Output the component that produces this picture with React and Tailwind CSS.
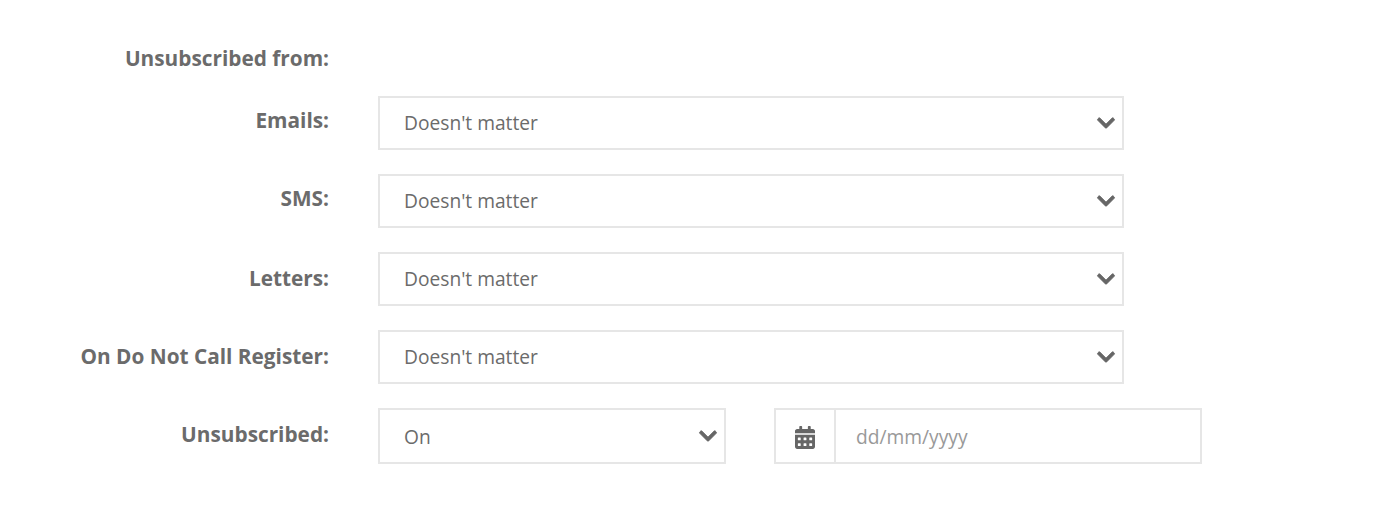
import { FaCalendarAlt, FaChevronDown } from 'react-icons/fa'

function SelectBox({ value, className, textClass }) {
  return (
    <div className={`flex h-full items-center justify-between border-2 border-[#e6e6e6] bg-white pl-[24px] pr-[6px] text-[19.2px] ${className}`}>
      <span className={`text-[#6b6b6b] ${textClass}`}>{value}</span>
      <FaChevronDown stroke="currentColor" strokeWidth={20} className="w-[20px] h-[20px] text-[#666]" />
    </div>
  )
}

function Row({ label, labelClass, children, className }) {
  return (
    <div className={`flex ${className}`}>
      <label className={`w-[329px] text-right font-bold text-[#6b6b6b] ${labelClass}`}>{label}</label>
      <div className="ml-[49px] flex">{children}</div>
    </div>
  )
}

export default function App() {
  const rows = [
    { label: 'Emails:', labelClass: 'pt-[11px]' },
    { label: 'SMS:', labelClass: 'pt-[11px]' },
    { label: 'Letters:', labelClass: 'pt-[13px]' },
    { label: 'On Do Not Call Register:', labelClass: 'pt-[13px]' },
  ]

  return (
    <div className="h-[520px] w-[1380px] overflow-hidden bg-white pt-[34px] text-[20.8px] leading-[27px] font-['Open_Sans',sans-serif]">
      <div className="h-[62px] w-[329px] pt-[11px] text-right font-bold text-[#6b6b6b]">Unsubscribed from:</div>

      {rows.map((row) => (
        <Row key={row.label} label={row.label} labelClass={row.labelClass} className="mb-[24px] h-[54px]">
          <SelectBox value="Doesn't matter" className="w-[746px]" textClass="pb-[2px]" />
        </Row>
      ))}

      <Row label="Unsubscribed:" labelClass="pt-[13px]" className="h-[56px]">
        <SelectBox value="On" className="w-[348px]" />
        <div className="ml-[48px] flex h-full w-[428px] border-2 border-[#e6e6e6] bg-white">
          <div className="flex w-[60px] items-center justify-center border-r-2 border-[#e6e6e6]">
            <FaCalendarAlt className="mt-[2px] h-[23px] w-[20px] text-[#666]" />
          </div>
          <div className="flex items-center pl-[20px] text-[19.2px] text-[#999]">dd/mm/yyyy</div>
        </div>
      </Row>
    </div>
  )
}
